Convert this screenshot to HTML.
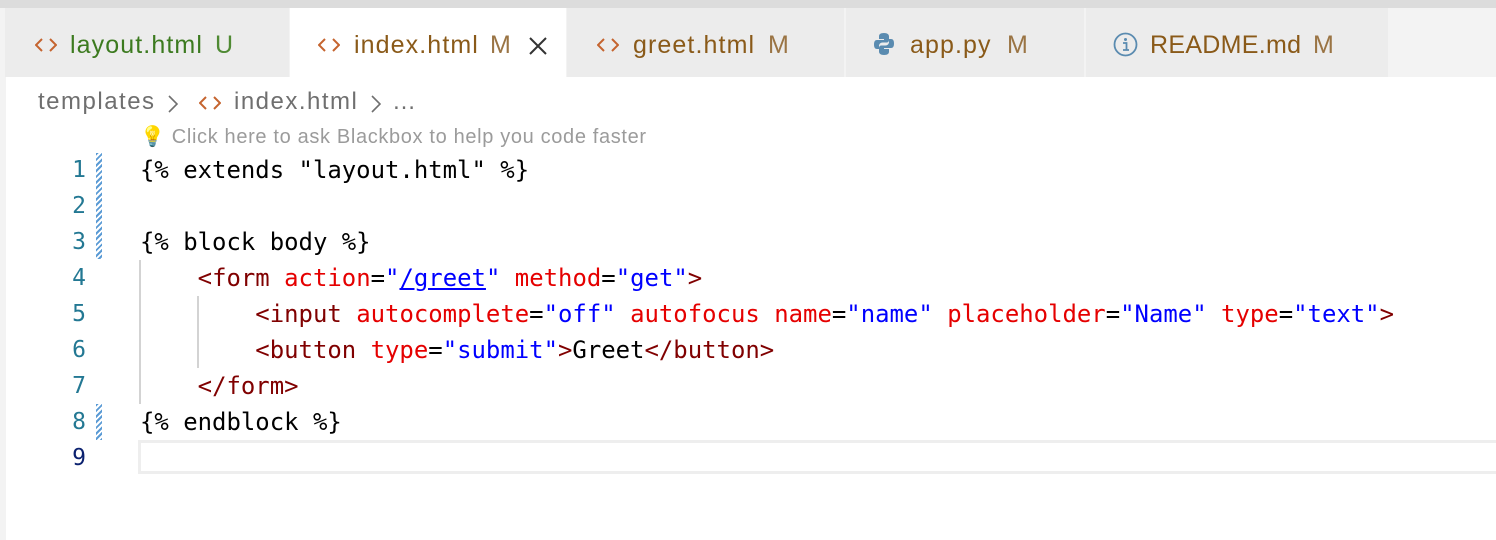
<!DOCTYPE html>
<html><head><meta charset="utf-8"><style>
*{margin:0;padding:0;box-sizing:border-box}
body{width:1496px;height:540px;background:#fff;position:relative;overflow:hidden;font-family:"Liberation Sans",sans-serif}
.top{position:absolute;left:0;top:0;width:1496px;height:8px;background:#dcdcdc}
.tabs{position:absolute;left:0;top:8px;width:1496px;height:69px;background:#f3f3f3}
.tab{position:absolute;top:0;height:69px;background:#ececec;font-size:25px;letter-spacing:1.1px;line-height:74px;white-space:nowrap}
.tab span{position:absolute;top:0}
.br{color:#8a5a19}.m{color:#9a7444;letter-spacing:0}
.left{position:absolute;left:0;top:77px;width:6px;height:463px;background:#f3f3f3}
.crumb{position:absolute;top:88px;font-size:24px;letter-spacing:1.5px;color:#6f6f6f;white-space:nowrap}
.hint{position:absolute;left:140px;top:124px;font-size:20px;letter-spacing:0.65px;color:#9b9b9b;white-space:nowrap}
.ln{position:absolute;width:86px;text-align:right;left:0;font-family:"DejaVu Sans Mono",monospace;font-size:23px;color:#237893;line-height:36px}
.code{position:absolute;left:140px;font-family:"DejaVu Sans Mono",monospace;font-size:23.95px;line-height:36px;white-space:pre;color:#000}
.t{color:#800000}.a{color:#e50000}.s{color:#0000ff}
.hatch{position:absolute;left:96px;width:6px;background:repeating-linear-gradient(135deg,#5b9bd5 0 2px,#fff 2px 4px)}
.guide{position:absolute;width:2px;background:#d3d3d3}
.chev{position:absolute;line-height:0}
</style></head><body>
<div class="top"></div>
<div class="tabs">
 <div class="tab" style="left:5px;width:284px"><span class="chev" style="left:30px;top:30px"><svg width="22" height="14" viewBox="0 0 22 14"><path d="M7 1L1 7l6 6M15 1l6 6-6 6" fill="none" stroke="#c5642f" stroke-width="2"/></svg></span><span style="left:65px;color:#3c7a1f">layout.html</span><span style="left:210px;color:#4f8a33;letter-spacing:0">U</span></div>
 <div class="tab" style="left:290px;width:276px;background:#fff"><span class="chev" style="left:28px;top:30px"><svg width="22" height="14" viewBox="0 0 22 14"><path d="M7 1L1 7l6 6M15 1l6 6-6 6" fill="none" stroke="#c5642f" stroke-width="2"/></svg></span><span class="br" style="left:64px">index.html</span><span class="m" style="left:200px">M</span><span class="chev" style="left:238px;top:28px"><svg width="20" height="20" viewBox="0 0 20 20"><path d="M2 2l16 16M18 2L2 18" stroke="#333" stroke-width="2"/></svg></span></div>
 <div class="tab" style="left:567px;width:277px"><span class="chev" style="left:30px;top:30px"><svg width="22" height="14" viewBox="0 0 22 14"><path d="M7 1L1 7l6 6M15 1l6 6-6 6" fill="none" stroke="#c5642f" stroke-width="2"/></svg></span><span class="br" style="left:66px">greet.html</span><span class="m" style="left:201px">M</span></div>
 <div class="tab" style="left:846px;width:238px"><span class="chev" style="left:28px;top:24px"><svg width="20" height="24" viewBox="0 0 20 24"><path d="M10 1c-4 0-5 1.5-5 3.5V7h5v1H3c-2 0-3 1.5-3 4.5S1 17 3 17h2v-3c0-2 1.5-3.5 3.5-3.5h4c1.5 0 2.5-1 2.5-2.5V4.5C15 2.5 13.5 1 10 1z" fill="#5a8bb0"/><path d="M10 23c4 0 5-1.5 5-3.5V17h-5v-1h7c2 0 3-1.5 3-4.5S19 7 17 7h-2v3c0 2-1.5 3.5-3.5 3.5h-4C6 13.5 5 14.5 5 16v3.5C5 21.5 6.5 23 10 23z" fill="#5a8bb0"/></svg></span><span class="br" style="left:64px">app.py</span><span class="m" style="left:161px">M</span></div>
 <div class="tab" style="left:1086px;width:302px"><span class="chev" style="left:27px;top:24px"><svg width="25" height="25" viewBox="0 0 25 25"><circle cx="12.5" cy="12.5" r="11" fill="none" stroke="#5a8bb0" stroke-width="1.8"/><circle cx="12.5" cy="7.5" r="1.5" fill="#5a8bb0"/><path d="M10 11h3.5v7M10 18h6" stroke="#5a8bb0" stroke-width="1.8" fill="none"/></svg></span><span class="br" style="left:64px;letter-spacing:0.3px">README.md</span><span class="m" style="left:227px">M</span></div>
</div>
<div class="left"></div>
<div class="crumb" style="left:38px">templates</div>
<div class="chev" style="left:168px;top:95px"><svg width="10" height="18" viewBox="0 0 10 18"><path d="M1 1l8 8-8 8" fill="none" stroke="#6f6f6f" stroke-width="1.6"/></svg></div>
<div class="chev" style="left:199px;top:96px"><svg width="22" height="14" viewBox="0 0 22 14"><path d="M7 1L1 7l6 6M15 1l6 6-6 6" fill="none" stroke="#c5642f" stroke-width="2"/></svg></div>
<div class="crumb" style="left:234px">index.html</div>
<div class="chev" style="left:371px;top:95px"><svg width="10" height="18" viewBox="0 0 10 18"><path d="M1 1l8 8-8 8" fill="none" stroke="#6f6f6f" stroke-width="1.6"/></svg></div>
<div class="crumb" style="left:392px;letter-spacing:0">…</div>
<div class="hint"><span style="color:#f1c232">💡</span> Click here to ask Blackbox to help you code faster</div>

<div class="hatch" style="top:153px;height:106px"></div>
<div class="hatch" style="top:404px;height:36px"></div>
<div class="guide" style="left:139px;top:260px;height:144px"></div>
<div class="guide" style="left:197px;top:296px;height:72px"></div>
<div style="position:absolute;left:138px;top:440px;width:1400px;height:34px;border:3px solid #eeeeee"></div>

<div class="ln" style="top:152px">1</div>
<div class="ln" style="top:188px">2</div>
<div class="ln" style="top:224px">3</div>
<div class="ln" style="top:260px">4</div>
<div class="ln" style="top:296px">5</div>
<div class="ln" style="top:332px">6</div>
<div class="ln" style="top:368px">7</div>
<div class="ln" style="top:404px">8</div>
<div class="ln" style="top:440px;color:#0b216f">9</div>

<div class="code" style="top:152px">{% extends "layout.html" %}</div>
<div class="code" style="top:224px">{% block body %}</div>
<div class="code" style="top:260px">    <span class="t">&lt;form</span> <span class="a">action</span>=<span class="s">"<u>/greet</u>"</span> <span class="a">method</span>=<span class="s">"get"</span><span class="t">&gt;</span></div>
<div class="code" style="top:296px">        <span class="t">&lt;input</span> <span class="a">autocomplete</span>=<span class="s">"off"</span> <span class="a">autofocus</span> <span class="a">name</span>=<span class="s">"name"</span> <span class="a">placeholder</span>=<span class="s">"Name"</span> <span class="a">type</span>=<span class="s">"text"</span><span class="t">&gt;</span></div>
<div class="code" style="top:332px">        <span class="t">&lt;button</span> <span class="a">type</span>=<span class="s">"submit"</span><span class="t">&gt;</span>Greet<span class="t">&lt;/button&gt;</span></div>
<div class="code" style="top:368px">    <span class="t">&lt;/form&gt;</span></div>
<div class="code" style="top:404px">{% endblock %}</div>
</body></html>
